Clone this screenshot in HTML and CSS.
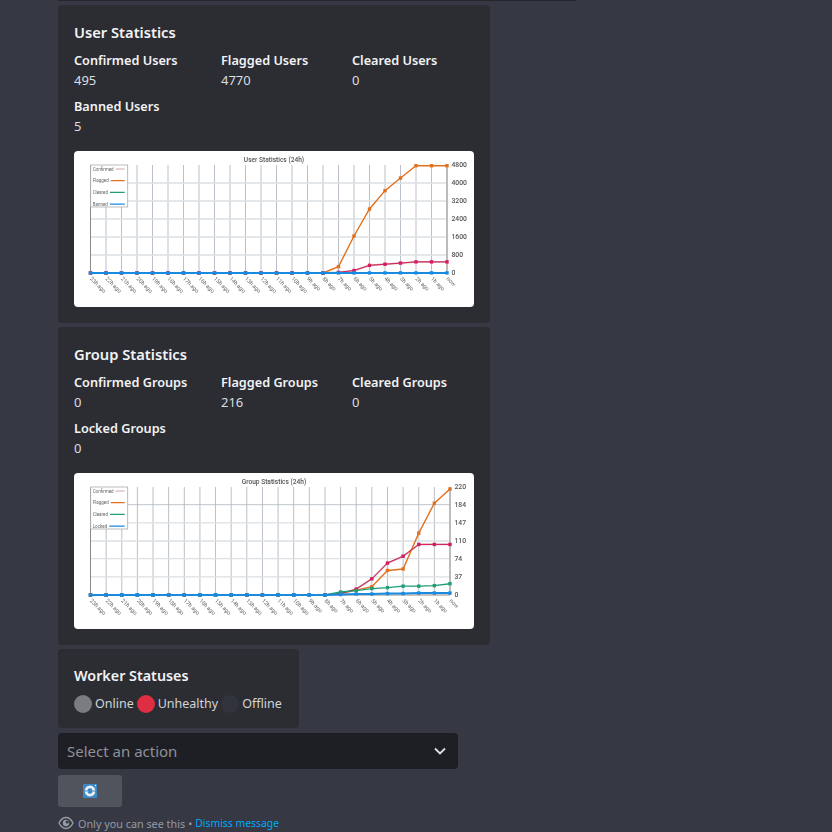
FILE: index.html
```html
<!DOCTYPE html>
<html>
    <head>
        <meta charset="UTF-8" />
        <title>Statistics</title>
        <link rel="stylesheet" href="styles.css">
    </head>
    <body>
        <div class="topline"></div>
        <div class="message">
            <div class="embed">
                <div class="embed-title">User Statistics</div>
                <div class="fields">
                    <div class="field"><div class="field-name">Confirmed Users</div><div class="field-value">495</div></div>
                    <div class="field"><div class="field-name">Flagged Users</div><div class="field-value">4770</div></div>
                    <div class="field"><div class="field-name">Cleared Users</div><div class="field-value">0</div></div>
                    <div class="field"><div class="field-name">Banned Users</div><div class="field-value">5</div></div>
                </div>
                <svg class="chart" width="400" height="156" viewBox="0 0 400 156" data-title="User Statistics (24h)" data-last="Banned" data-right="373" data-max="4800" data-ticks="4800,4000,3200,2400,1600,800,0" data-flagged="0,0,0,0,0,0,0,0,0,0,0,0,0,0,0,0,281,1644,2844,3660,4222,4770,4770,4770" data-confirmed="0,0,0,0,0,0,0,0,0,0,0,0,0,0,0,0,30,110,340,390,440,495,495,495" data-cleared="" data-locked="0,0,0,0,0,0,0,0,0,0,0,0,0,0,0,0,2,3,3,4,4,5,5,5"></svg>
            </div>
            <div class="embed">
                <div class="embed-title">Group Statistics</div>
                <div class="fields">
                    <div class="field"><div class="field-name">Confirmed Groups</div><div class="field-value">0</div></div>
                    <div class="field"><div class="field-name">Flagged Groups</div><div class="field-value">216</div></div>
                    <div class="field"><div class="field-name">Cleared Groups</div><div class="field-value">0</div></div>
                    <div class="field"><div class="field-name">Locked Groups</div><div class="field-value">0</div></div>
                </div>
                <svg class="chart" width="400" height="156" viewBox="0 0 400 156" data-title="Group Statistics (24h)" data-last="Locked" data-right="376" data-dark="184" data-max="220" data-ticks="220,184,147,110,74,37,0" data-flagged="0,0,0,0,0,0,0,0,0,0,0,0,0,0,0,0,3,10,17,50,53,126,187,216" data-confirmed="0,0,0,0,0,0,0,0,0,0,0,0,0,0,0,0,3,12,33,65,79,103,103,103" data-cleared="0,0,0,0,0,0,0,0,0,0,0,0,0,0,0,0,6,9,13,15,18,18,19,23" data-locked="0,0,0,0,0,0,0,0,0,0,0,0,0,0,0,0,1,2,2,3,3,4,4,4"></svg>
            </div>
            <div class="embed embed-small">
                <div class="embed-title">Worker Statuses</div>
                <div class="statuses">
                    <span class="dot dot-grey"></span><span class="status-label">Online</span>
                    <span class="dot dot-red"></span><span class="status-label">Unhealthy</span>
                    <span class="dot dot-dark"></span><span class="status-label">Offline</span>
                </div>
            </div>
            <div class="select">
                <span>Select an action</span>
                <svg width="12" height="8" viewBox="0 0 12 8"><path d="M1 1.5 L6 6.5 L11 1.5" fill="none" stroke="#e0e1e5" stroke-width="1.8"/></svg>
            </div>
            <button class="refresh">
                <svg width="14" height="14" viewBox="0 0 14 14">
                    <rect width="14" height="14" rx="1" fill="#3b88c3"/>
                    <path d="M3 6.5 A4 4 0 0 1 10.5 5 M11 7.5 A4 4 0 0 1 3.5 9" fill="none" stroke="#e8eef3" stroke-width="2.6"/>
                    <path d="M8.5 6.5 L12.5 6.5 L11 3 Z M1.5 7.5 L5.5 7.5 L3 11 Z" fill="#e8eef3"/>
                    <circle cx="12.5" cy="1.5" r="0.7" fill="#fff"/>
                </svg>
            </button>
            <div class="ephemeral">
                <svg width="16" height="16" viewBox="0 0 16 16">
                    <path d="M1 8 C3 4 5.5 2.5 8 2.5 C10.5 2.5 13 4 15 8 C13 12 10.5 13.5 8 13.5 C5.5 13.5 3 12 1 8 Z" fill="none" stroke="#949ba4" stroke-width="1.4"/>
                    <circle cx="8" cy="8" r="3.2" fill="#949ba4"/>
                    <circle cx="9.2" cy="7" r="1.6" fill="#363844"/>
                </svg>
                <span>Only you can see this</span>
                <span>•</span>
                <span class="dismiss">Dismiss message</span>
            </div>
        </div>
        <script src="chart.js"></script>
    </body>
</html>
```

FILE: styles.css
```css
*{
    box-sizing: border-box;
}
body{
    margin: 0;
    height: 832px;
    overflow: hidden;
    background-color: #363844;
    font-family: "Noto Sans", "Open Sans", sans-serif;
    color: #dbdee1;
}
.topline{
    width: 518px;
    height: 1px;
    margin-left: 58px;
    background-color: #26272d;
}
.message{
    width: 432px;
    margin-left: 58px;
    padding-top: 4px;
    display: flex;
    flex-direction: column;
    align-items: flex-start;
}
.embed{
    width: 432px;
    height: 318px;
    margin-bottom: 4px;
    padding: 16px;
    background-color: #2c2d32;
    border-radius: 4px;
}
.embed-small{
    width: 241px;
    height: 79px;
    margin-bottom: 5px;
}
.embed-title{
    font-size: 14.7px;
    line-height: 22px;
    font-weight: 600;
    color: #f2f3f5;
}
.embed-small .embed-title{
    font-size: 14.3px;
}
.fields{
    display: grid;
    grid-template-columns: 147px 131px 1fr;
    margin-top: 7px;
}
.field{
    height: 46px;
}
.field-name{
    font-size: 12.7px;
    line-height: 20px;
    font-weight: 600;
    color: #f2f3f5;
}
.field-value{
    font-size: 13px;
    line-height: 20px;
    color: #dbdee1;
}
.chart{
    display: block;
    margin-top: 9px;
    background-color: #fff;
    border-radius: 4px;
    font-family: Roboto, sans-serif;
    filter: blur(0.35px);
}
.statuses{
    display: flex;
    align-items: center;
    margin-top: 8px;
}
.dot{
    flex: none;
    width: 18px;
    height: 18px;
    border-radius: 50%;
    margin-right: 3px;
}
.dot-grey{
    background-color: #7b7c80;
}
.dot-red{
    background-color: #dd2e44;
}
.dot-dark{
    background-color: #31333d;
}
.status-label{
    font-size: 12.5px;
    line-height: 18px;
    margin-right: 3px;
    color: #d2d4d9;
}
.select{
    width: 400px;
    height: 36px;
    padding: 0 12px 0 9px;
    display: flex;
    align-items: center;
    justify-content: space-between;
    background-color: #1e1f24;
    border-radius: 4px;
    font-size: 15px;
    color: #8f9098;
    margin-bottom: 6px;
}
.refresh{
    width: 64px;
    height: 32px;
    padding: 0;
    border: 0;
    border-radius: 3px;
    background-color: #51535d;
    display: flex;
    align-items: center;
    justify-content: center;
}
.ephemeral{
    display: flex;
    align-items: center;
    gap: 3px;
    margin-top: 8px;
    height: 16px;
    font-size: 10.8px;
    color: #949ba4;
}
.ephemeral svg{
    margin-right: 1px;
}
.dismiss{
    color: #00a8fc;
    font-size: 10.4px;
}
```

FILE: chart.js
```js
// draws the two line charts from the data-* attributes on each svg
var NS = "http://www.w3.org/2000/svg";
var COLORS = { confirmed: "#d81b60", flagged: "#e2711d", cleared: "#1f9e7a", locked: "#1a8ae0", tan: "#c9aaa5" };
var LEFT = 16.5, TOP = 14, BOTTOM = 122;

function add(svg, name, attrs, text){
    var el = document.createElementNS(NS, name);
    for(var k in attrs){
        el.setAttribute(k, attrs[k]);
    }
    if(text !== undefined){
        el.textContent = text;
    }
    svg.appendChild(el);
    return el;
}

function points(values, max, step){
    return values.split(",").map(function(v, i){
        return [LEFT + i * step, BOTTOM - Number(v) / max * (BOTTOM - TOP)];
    });
}

function series(svg, pts, color, width){
    add(svg, "polyline", { points: pts.join(" "), fill: "none", stroke: color, "stroke-width": width });
    pts.forEach(function(p){
        add(svg, "rect", { x: p[0] - 1.7, y: p[1] - 1.7, width: 3.4, height: 3.4, fill: color });
    });
}

var charts = document.querySelectorAll(".chart");
for(var c = 0; c < charts.length; c++){
    var svg = charts[c];
    var d = svg.dataset;
    var max = Number(d.max);
    var right = Number(d.right);
    var step = (right - LEFT) / 23;
    add(svg, "text", { x: 200, y: 11, "text-anchor": "middle", "font-size": 6.6, "font-weight": 500, fill: "#555" }, d.title);

    for(var i = 0; i < 24; i++){
        var x = LEFT + i * step;
        add(svg, "line", { x1: x, x2: x, y1: TOP, y2: BOTTOM, stroke: "#b9c0c7", "stroke-width": 1 });
        var hour = 23 - i;
        var label = hour == 0 ? "now" : hour + "h ago";
        add(svg, "text", { x: x - 1, y: BOTTOM + 6, "font-size": 5.6, fill: "#666", transform: "rotate(45 " + (x - 1) + " " + (BOTTOM + 6) + ")" }, label);
    }

    var ticks = d.ticks.split(",");
    ticks.forEach(function(t, n){
        var y = BOTTOM - Number(t) / max * (BOTTOM - TOP);
        if(n > 0 && n < ticks.length - 1){
            if(t == d.dark){
                add(svg, "line", { x1: LEFT, x2: right, y1: y, y2: y, stroke: "#aeb6bd", "stroke-width": 0.8 });
            }else{
                add(svg, "line", { x1: LEFT, x2: right, y1: y, y2: y, stroke: "#dde0e4", "stroke-width": 1.4 });
            }
        }
        add(svg, "text", { x: right + 4.5, y: y + 2.4, "font-size": 6.8, "font-weight": 500, fill: "#555" }, t);
    });
    add(svg, "line", { x1: LEFT, x2: LEFT, y1: TOP, y2: BOTTOM, stroke: "#888", "stroke-width": 1 });
    add(svg, "line", { x1: right, x2: right, y1: TOP, y2: BOTTOM, stroke: "#999", "stroke-width": 1 });
    add(svg, "line", { x1: LEFT, x2: right, y1: BOTTOM, y2: BOTTOM, stroke: "#888", "stroke-width": 1 });

    var confirmed = points(d.confirmed, max, step);
    add(svg, "polyline", { points: confirmed.join(" "), fill: "none", stroke: COLORS.tan, "stroke-width": 1.8 });
    series(svg, points(d.flagged, max, step), COLORS.flagged, 1.4);
    series(svg, confirmed, COLORS.confirmed, 1);
    if(d.cleared){
        series(svg, points(d.cleared, max, step), COLORS.cleared, 1.4);
    }
    series(svg, points(d.locked, max, step), COLORS.locked, 2);

    // legend box over the plot
    add(svg, "rect", { x: 16.7, y: 14, width: 37, height: 42, fill: "#fff", stroke: "#aaa", "stroke-width": 0.8 });
    [["Confirmed", COLORS.tan], ["Flagged", COLORS.flagged], ["Cleared", COLORS.cleared], [d.last, COLORS.locked]].forEach(function(row, n){
        var y = 18 + n * 11.7;
        var txt = add(svg, "text", { x: 18.7, y: y + 1.6, "font-size": 4.5, fill: "#666" }, row[0]);
        add(svg, "line", { x1: 18.7 + txt.getComputedTextLength() + 2, x2: 50.7, y1: y, y2: y, stroke: row[1], "stroke-width": 1.2 });
    });
}
```
